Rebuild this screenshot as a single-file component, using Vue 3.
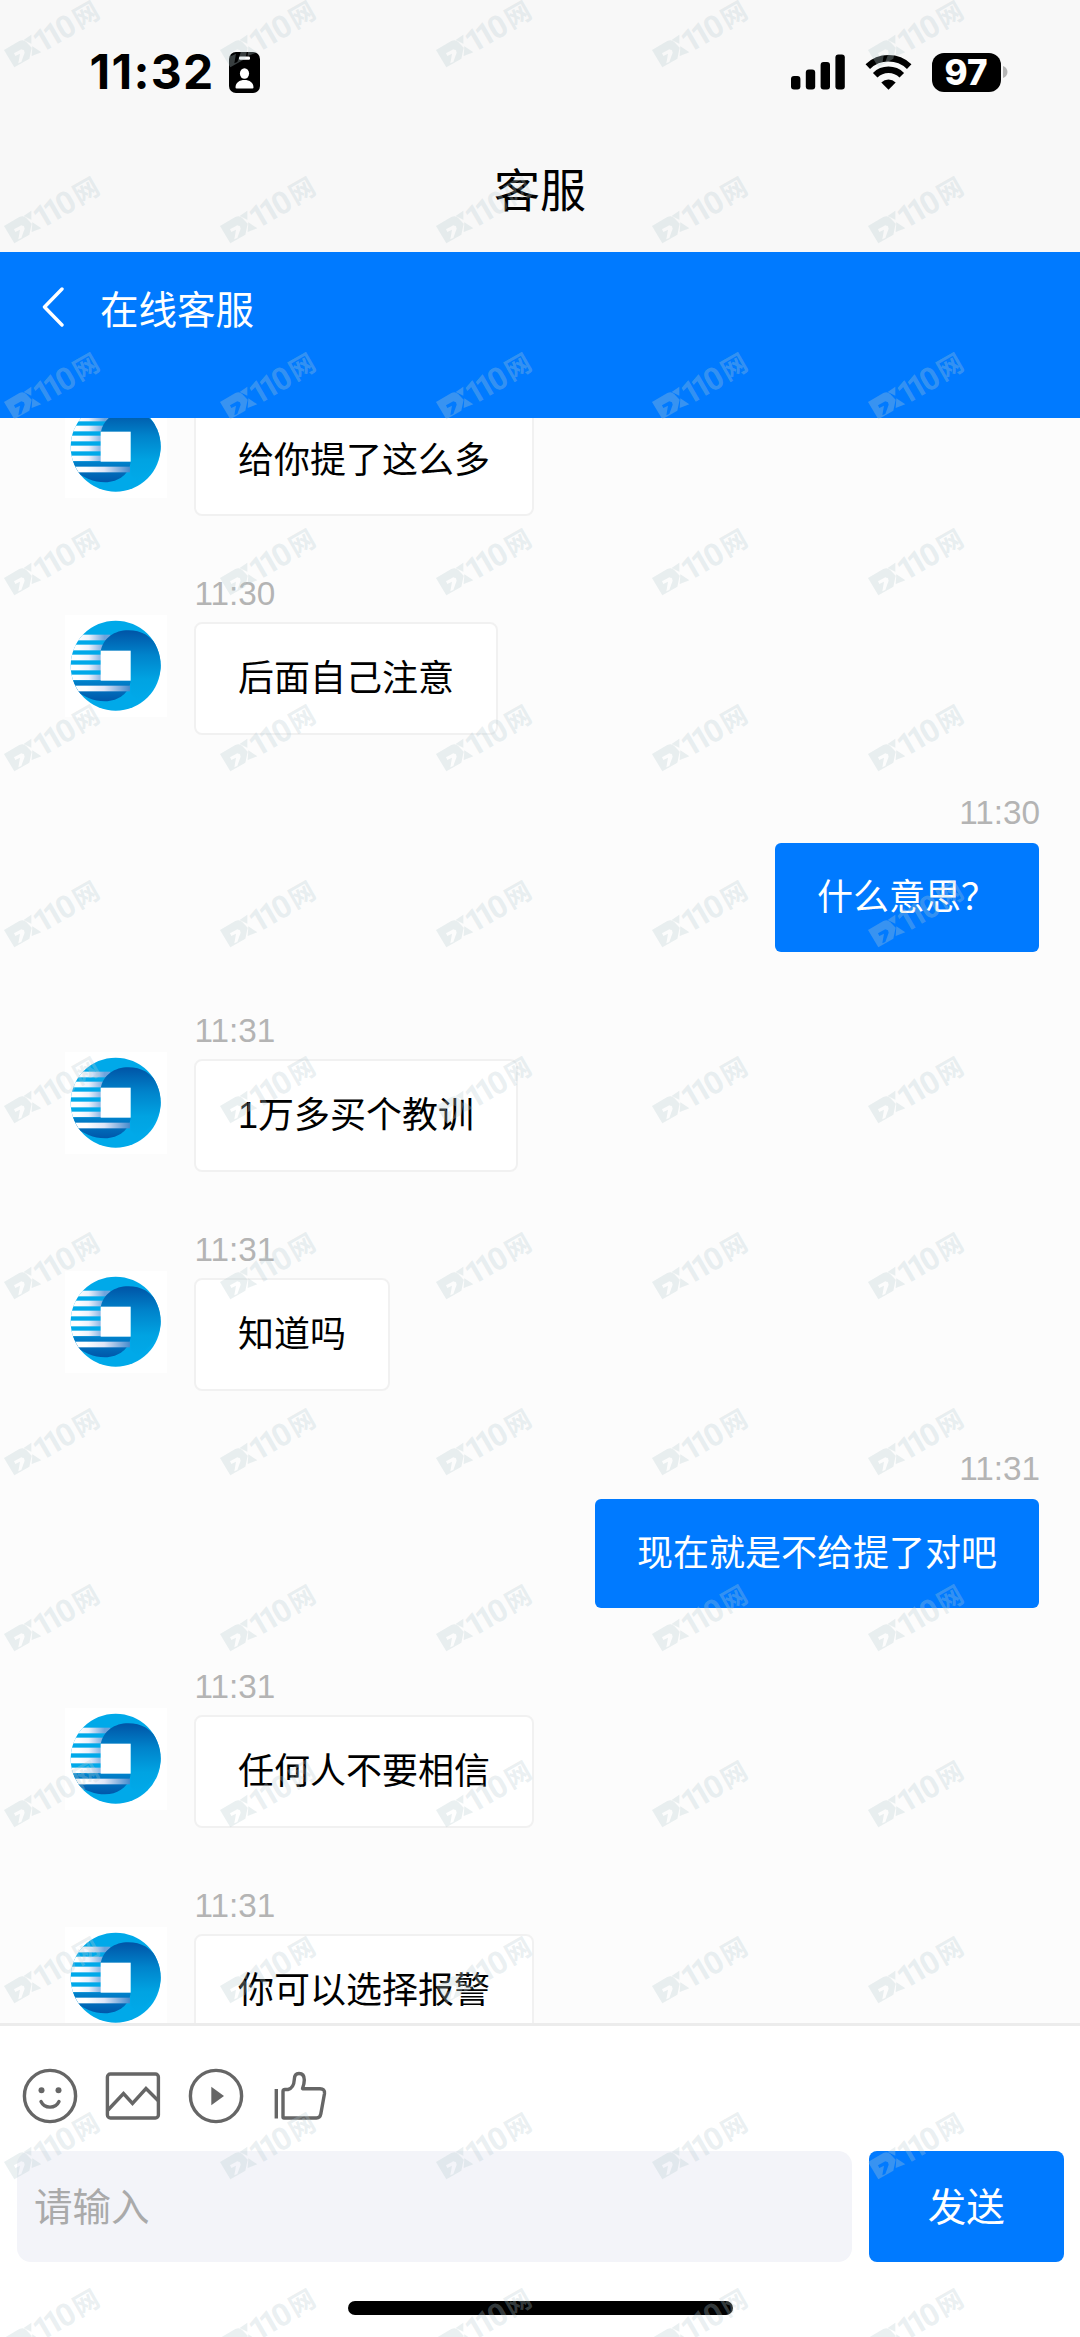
<script setup>
const messages = [
  { side: 'left', time: '11:30', text: '给你提了这么多' },
  { side: 'left', time: '11:30', text: '后面自己注意' },
  { side: 'right', time: '11:30', text: '什么意思？' },
  { side: 'left', time: '11:31', text: '1万多买个教训' },
  { side: 'left', time: '11:31', text: '知道吗' },
  { side: 'right', time: '11:31', text: '现在就是不给提了对吧' },
  { side: 'left', time: '11:31', text: '任何人不要相信' },
  { side: 'left', time: '11:31', text: '你可以选择报警' },
]

const stripes = [103, 133, 163, 193, 223]

const marks = []
for (let row = 0; row < 14; row++) {
  for (let col = 0; col < 5; col++) marks.push({ x: col * 216, y: row * 176 })
}
</script>

<template>
  <div class="screen">
    <!-- shared gradients and the avatar symbol -->
    <svg class="defs" width="0" height="0" aria-hidden="true">
      <defs>
        <linearGradient id="swirl" x1="0" y1="0" x2="0" y2="1">
          <stop offset="0" stop-color="#0054a6" />
          <stop offset="0.35" stop-color="#0083cb" />
          <stop offset="0.7" stop-color="#00a3e2" />
          <stop offset="1" stop-color="#00a9e9" />
        </linearGradient>
        <linearGradient id="bowl" x1="0" y1="0" x2="0" y2="1">
          <stop offset="0" stop-color="#0083cc" />
          <stop offset="1" stop-color="#0057aa" />
        </linearGradient>
        <linearGradient id="fade" gradientUnits="userSpaceOnUse" x1="85" y1="0" x2="165" y2="0">
          <stop offset="0" stop-color="#fff" />
          <stop offset="0.4" stop-color="#edf1fb" />
          <stop offset="1" stop-color="#6ea4dc" />
        </linearGradient>
        <linearGradient id="fade-long" gradientUnits="userSpaceOnUse" x1="110" y1="0" x2="245" y2="0">
          <stop offset="0" stop-color="#fff" />
          <stop offset="0.4" stop-color="#dfe5f6" />
          <stop offset="1" stop-color="#3d86cb" />
        </linearGradient>
        <clipPath id="disc"><circle cx="198" cy="196" r="135" /></clipPath>
        <symbol id="avatar" viewBox="46 44 306 306">
          <rect x="46" y="44" width="306" height="306" fill="#fff" />
          <g clip-path="url(#disc)">
            <rect x="60" y="58" width="276" height="276" fill="#00a9e9" />
            <rect v-for="y in stripes" :key="y" x="60" :y="y" width="122" height="17" fill="url(#fade)" />
            <path d="M153 155C160 112 195 90 236 90C275 90 305 106 328 146C350 200 325 262 262 300L243 280V152Z" fill="url(#swirl)" />
            <path d="M60 240H243C241 277 207 303 166 303C130 303 105 290 60 262Z" fill="url(#bowl)" />
            <rect x="60" y="256" width="181" height="17" fill="url(#fade-long)" />
          </g>
          <rect x="153" y="151" width="90" height="90" fill="#fff" />
        </symbol>
      </defs>
    </svg>

    <header class="top">
      <div class="status">
        <span class="clock">11:32</span>
        <svg class="badge" width="31" height="41" viewBox="0 0 31 41">
          <rect width="31" height="41" rx="7" fill="#000" />
          <rect x="10" y="4.5" width="11" height="3.2" rx="1.2" fill="#fff" />
          <ellipse cx="15.5" cy="21.5" rx="4.6" ry="5.2" fill="#fff" />
          <path d="M6.500 35.500C6.500 30.500 10.500 28 15.500 28S24.500 30.500 24.500 35.500Q24.500 36.500 23.500 36.500H7.500Q6.500 36.500 6.500 35.500Z" fill="#fff" />
        </svg>
        <span class="spacer"></span>
        <svg width="54" height="36" viewBox="0 0 54 36">
          <rect x="0" y="22" width="9.400" height="13.500" rx="3" />
          <rect x="14.800" y="15.500" width="9.400" height="20" rx="3" />
          <rect x="29.600" y="8" width="9.400" height="27.500" rx="3" />
          <rect x="44.400" y="0.500" width="9.400" height="35" rx="3" />
        </svg>
        <svg class="wifi" width="47" height="36" viewBox="0 0 47 36">
          <g fill="none" stroke="#000" stroke-width="6.500">
            <path d="M2.800 12.600A30 30 0 0 1 44.200 12.600" />
            <path d="M10.200 21.200A19 19 0 0 1 36.800 21.200" />
          </g>
          <path d="M23.500 35.800L16.300 28.400A10.500 10.500 0 0 1 30.700 28.400Z" />
        </svg>
        <span class="battery">97</span>
        <svg class="nub" width="5" height="12" viewBox="0 0 5 12"><path d="M0 0C6 2 6 10 0 12Z" fill="#b4b4b4" /></svg>
      </div>
      <h1 class="title">客服</h1>
    </header>

    <nav class="bar">
      <svg width="22" height="40" viewBox="0 0 22 40">
        <path d="M20 2L2.500 20L20 38" fill="none" stroke="#fff" stroke-width="3.400" stroke-linecap="round" stroke-linejoin="round" />
      </svg>
      <span class="bar-title">在线客服</span>
    </nav>

    <main class="chat">
      <div class="list">
        <div v-for="(m, i) in messages" :key="i" class="row" :class="m.side">
          <svg v-if="m.side === 'left'" class="avatar"><use href="#avatar" /></svg>
          <div class="body">
            <div class="time">{{ m.time }}</div>
            <div class="bubble">{{ m.text }}</div>
          </div>
        </div>
      </div>
    </main>

    <footer class="composer">
      <div class="tools">
        <svg width="56" height="56" viewBox="0 0 56 56">
          <circle cx="28" cy="28" r="25.600" />
          <circle class="solid" cx="19.500" cy="22.300" r="3" />
          <circle class="solid" cx="36.500" cy="22.300" r="3" />
          <path d="M19 33.500C22.500 41 33.500 41 37 33.500" stroke-linecap="round" />
        </svg>
        <svg width="56" height="56" viewBox="0 0 56 56">
          <rect x="2.400" y="6" width="51" height="44" rx="3" />
          <path d="M3 42L18.500 25.500L27.500 35.500L41 20.500L53 32.500" />
        </svg>
        <svg width="56" height="56" viewBox="0 0 56 56">
          <circle cx="28" cy="28" r="25.600" />
          <path class="solid" d="M23.300 18.800L36 28L23.300 37.200Z" />
        </svg>
        <svg width="56" height="56" viewBox="0 0 56 56">
          <path d="M4.300 21V50.500" />
          <path d="M11 49.500V23.500Q11 21.500 13 21.500H16C20.500 20.500 22 17 22.300 11.500C22.300 7 24 5.500 27 5.500C31 5.500 32.300 8.500 32.300 12C32.300 15.500 31.500 18 30.500 20.700H48Q53 20.700 52.500 25.500L48.800 46Q48 50 44.500 50H12Q11 50 11 49Z" stroke-linejoin="round" />
        </svg>
      </div>
      <div class="entry">
        <div class="input">请输入</div>
        <div class="send">发送</div>
      </div>
      <div class="home"></div>
    </footer>

    <svg class="watermark" width="1080" height="2337" viewBox="0 0 1080 2337">
      <g v-for="(w, i) in marks" :key="i" :transform="`translate(${w.x - 8} ${w.y - 16}) scale(0.33333)`">
        <path
          fill-rule="evenodd"
          d="M36 198L82 171Q94 165 102 173L119 191L112 224L67 250ZM66 208L70 216L84 209L79 238L88 234L98 206L96 199L88 196Z"
        />
        <path d="M95 168L118 152V179ZM121 187L148 205L119 216Z" />
        <g transform="translate(52 224) rotate(-30)">
          <text x="116 152 194" y="34">110</text>
          <text class="cjk" x="265" y="29">网</text>
        </g>
      </g>
    </svg>
  </div>
</template>

<style>
body {
  margin: 0;
  background: #fff;
}
</style>

<style scoped>
.screen {
  position: relative;
  display: flex;
  flex-direction: column;
  width: 1080px;
  height: 2337px;
  overflow: hidden;
  background: #fff;
  font-family: "Liberation Sans", "Noto Sans CJK SC", sans-serif;
  color: #000;
}
.defs {
  position: absolute;
}
.top {
  flex: none;
  height: 252px;
  background: #f8f8f8;
}
.status {
  display: flex;
  align-items: center;
  height: 144px;
  padding: 0 72.500px 0 89.500px;
}
.clock {
  width: 139.500px;
  font: 700 48px/60px Inter, sans-serif;
  letter-spacing: 1.300px;
  white-space: nowrap;
}
.spacer {
  flex: 1;
}
.wifi {
  margin-left: 20px;
}
.battery {
  width: 69px;
  height: 39px;
  margin-left: 20px;
  border-radius: 12px;
  background: #000;
  color: #fff;
  font: 800 35px/39px Inter, sans-serif;
  text-align: center;
}
.nub {
  margin-left: 2px;
}
.title {
  margin: 0;
  padding-top: 14px;
  font-size: 46px;
  line-height: 66px;
  font-weight: 400;
  text-align: center;
}
.bar {
  box-sizing: border-box;
  display: flex;
  align-items: flex-start;
  flex: none;
  height: 165.500px;
  padding: 35px 0 0 42px;
  background: #007aff;
}
.bar-title {
  margin: 2px 0 0 36px;
  color: #fff;
  font-size: 38.500px;
  line-height: 44px;
}
.chat {
  flex: none;
  height: 1605.500px;
  overflow: hidden;
  background: #fcfcfc;
}
.list {
  margin-top: -74px;
}
.row {
  display: flex;
  height: 218.670px;
}
.row.right {
  justify-content: flex-end;
}
.avatar {
  width: 102px;
  height: 102px;
  margin: 52.700px 27.200px 0 65.300px;
}
.body {
  display: flex;
  flex-direction: column;
  align-items: flex-start;
  padding-top: 10px;
}
.right .body {
  align-items: flex-end;
  padding-right: 41px;
}
.time {
  height: 44px;
  margin-bottom: 6px;
  color: #b4b4b4;
  font-size: 33.300px;
  line-height: 44px;
}
.right .time {
  margin-right: -1px;
}
.bubble {
  box-sizing: border-box;
  height: 112.500px;
  padding: 1px 41.500px 0;
  border: 2.500px solid #f1f1f1;
  border-radius: 8px;
  background: #fff;
  font-size: 36px;
  line-height: 108px;
  white-space: nowrap;
}
.right .bubble {
  height: 108.500px;
  margin-top: 2.500px;
  padding: 1px 42px 0;
  border: 0;
  border-radius: 6px;
  background: #007aff;
  color: #fff;
}
.composer {
  display: flex;
  flex-direction: column;
  flex: 1;
  border-top: 3px solid #ececec;
  background: #fff;
}
.tools {
  display: flex;
  gap: 27.200px;
  padding: 41.500px 0 0 22px;
}
.tools svg {
  fill: none;
  stroke: #666;
  stroke-width: 3.400;
}
.tools .solid {
  fill: #666;
  stroke: none;
}
.entry {
  display: flex;
  gap: 17px;
  padding: 27.500px 16.500px 0 17px;
}
.input,
.send {
  box-sizing: border-box;
  height: 111px;
  padding-top: 1px;
  font-size: 38.500px;
  line-height: 111px;
}
.input {
  flex: 1;
  padding-left: 17px;
  border-radius: 14px;
  background: #f3f4f9;
  color: #aaa;
}
.send {
  width: 194.500px;
  border-radius: 8px;
  background: #007aff;
  color: #fff;
  text-align: center;
}
.home {
  width: 385px;
  height: 14px;
  margin: 38.500px auto 0;
  border-radius: 7px;
  background: #000;
}
.watermark {
  position: absolute;
  top: 0;
  left: 0;
  fill: rgba(184, 204, 210, 0.3);
  pointer-events: none;
}
.watermark text {
  font: 700 94px Roboto, sans-serif;
  text-anchor: middle;
}
.watermark .cjk {
  font: 700 77px "Noto Sans CJK SC", sans-serif;
}
</style>
